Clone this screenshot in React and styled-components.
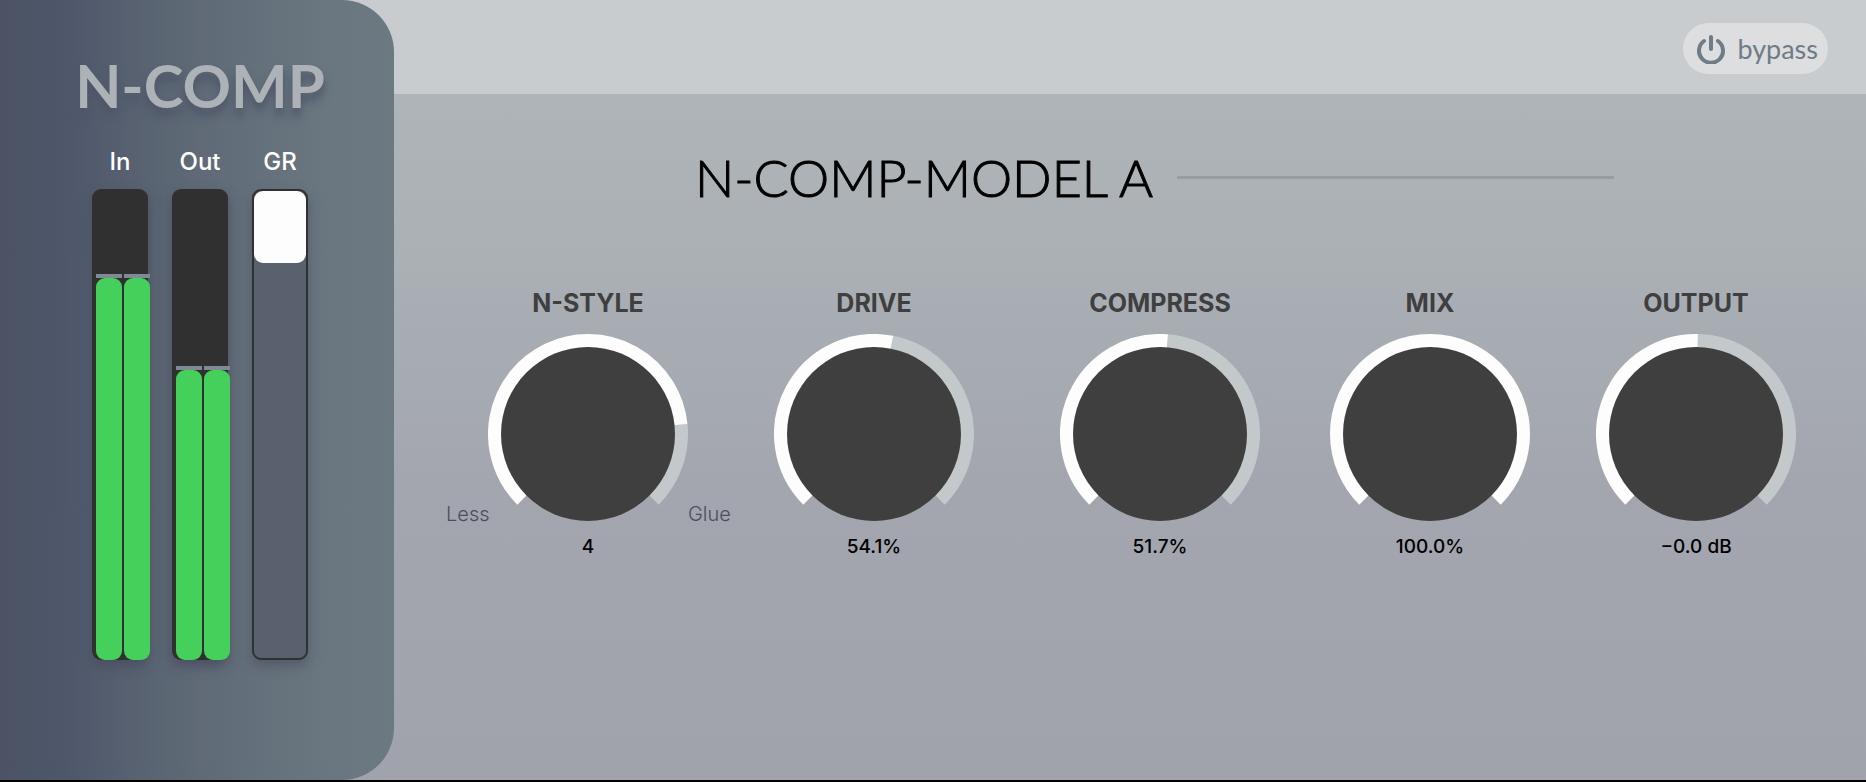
import React, { useState } from "react";
import styled, { createGlobalStyle } from "styled-components";

const GlobalStyle = createGlobalStyle`
  * {
    box-sizing: border-box;
  }
  body {
    margin: 0;
    background: #000;
    font-family: "Inter", sans-serif;
  }
`;

const Plugin = styled.div`
  display: flex;
  min-height: 100vh;
  border-bottom: 2px solid #000;
  background: linear-gradient(
    #aeb4b7 12%,
    #aab0b4 34%,
    #a8adb4 40%,
    #a3a6ae 62%,
    #a0a3ab
  );
`;

const Sidebar = styled.aside`
  position: relative;
  z-index: 1;
  flex: 0 0 394px;
  display: flex;
  flex-direction: column;
  align-items: center;
  padding: 51px 0 120px 6px;
  border-radius: 0 52px 52px 0;
  background: linear-gradient(
    90deg,
    #4b5364,
    #4e576a 16%,
    #5f6a76 50%,
    #6a7780 84%,
    #6d7981
  );
`;

const Logo = styled.h1`
  margin: 0;
  font-family: "Lato", sans-serif;
  font-size: 60px;
  font-weight: 700;
  line-height: 68px;
  white-space: nowrap;
  color: #acb2b6;
  text-shadow: 0 8px 8px #4e5568;
`;

const Meters = styled.div`
  flex: 1;
  display: flex;
  gap: 24px;
  padding-top: 27px;
`;

const Meter = styled.div`
  display: flex;
  flex-direction: column;
  align-items: center;
  gap: 11px;
  width: 56px;
`;

const MeterLabel = styled.span`
  font-size: 24px;
  font-weight: 500;
  line-height: 32px;
  color: #fff;
`;

const Track = styled.div`
  flex: 1;
  display: flex;
  align-items: flex-end;
  gap: 2px;
  width: 56px;
  min-height: 200px;
  padding-left: 4px;
  border-radius: 9px;
  background: #303030;
  box-shadow: 0 6px 12px #4b4f62;
`;

const Level = styled.div`
  flex: 0 0 26px;
  height: ${(props) => props.$level}%;
  border-top: 4px solid #808a94;
  &::after {
    content: "";
    display: block;
    height: 100%;
    border-radius: 9px;
    background: #44d05b;
  }
`;

const Reduction = styled.div`
  flex: 1;
  width: 56px;
  min-height: 200px;
  border: 2px solid #303030;
  border-radius: 9px;
  background: #59616f;
  box-shadow: 0 6px 12px #555a69;
`;

const ReductionFill = styled.div`
  height: 72px;
  border-radius: 9px;
  background: #fdfdfd;
`;

const Main = styled.main`
  flex: 1;
  min-width: 0;
  display: flex;
  flex-direction: column;
`;

/* runs on behind the rounded corner of the sidebar */
const TopBar = styled.header`
  display: flex;
  justify-content: flex-end;
  align-items: center;
  height: 94px;
  margin-left: -52px;
  padding: 3px 38px 0 0;
  background: #c8ccce;
`;

const Bypass = styled.button`
  display: flex;
  align-items: center;
  gap: 11px;
  height: 51px;
  padding: 0 10px 0 13px;
  border: 0;
  border-radius: 26px;
  background: #dcdee0;
  font-family: "Lato", sans-serif;
  font-size: 27px;
  line-height: 32px;
  color: #6f7c86;
  cursor: pointer;
`;

const Panel = styled.section`
  padding: 51px 31px 32px 51px;
`;

const Heading = styled.div`
  display: flex;
  align-items: center;
  gap: 24px;
  padding: 0 221px 0 250px;
`;

const Title = styled.h2`
  margin: 0;
  font-family: "Lato", sans-serif;
  font-size: 52px;
  font-weight: 300;
  line-height: 64px;
  white-space: nowrap;
  color: #000;
  -webkit-text-stroke: 1px #000;
`;

const Rule = styled.div`
  flex: 1;
  height: 3px;
  background: #999da1;
`;

const Controls = styled.div`
  display: grid;
  grid-template-columns: 286fr 286fr 286fr 254fr 278fr;
  margin-top: 78px;
`;

const Control = styled.div`
  display: flex;
  flex-direction: column;
  align-items: center;
`;

const ControlName = styled.label`
  font-size: 25px;
  font-weight: 700;
  line-height: 32px;
  color: #3f3f3f;
`;

const DialRow = styled.div`
  display: flex;
  align-items: flex-end;
  margin-top: 15px;
`;

const Dial = styled.div`
  position: relative;
  width: 200px;
  height: 200px;
  svg {
    display: block;
  }
`;

const Range = styled.input`
  position: absolute;
  inset: 0;
  width: 100%;
  height: 100%;
  margin: 0;
  opacity: 0;
  cursor: pointer;
`;

const Bound = styled.span`
  width: 42px;
  padding-bottom: 8px;
  font-size: 20px;
  font-weight: 300;
  line-height: 24px;
  text-align: center;
  color: #4a505a;
`;

const Value = styled.output`
  margin-top: 1px;
  font-size: 19px;
  font-weight: 500;
  line-height: 24px;
  color: #000;
`;

const meters = [
  { label: "In", levels: [82, 82] },
  { label: "Out", levels: [62.5, 62.5] },
];

const percent = (v) => `${v.toFixed(1)}%`;
const decibel = (v) => `${v > 0 ? "" : "−"}${Math.abs(v).toFixed(1)} dB`;

const controls = [
  { name: "N-STYLE", value: 4, min: 0, max: 5, step: 1, fill: 0.812, low: "Less", high: "Glue", format: (v) => `${v}` },
  { name: "DRIVE", value: 54.1, min: 0, max: 100, step: 0.1, format: percent },
  { name: "COMPRESS", value: 51.7, min: 0, max: 100, step: 0.1, format: percent },
  { name: "MIX", value: 100, min: 0, max: 100, step: 0.1, format: percent },
  { name: "OUTPUT", value: 0, min: -12, max: 12, step: 0.1, fill: 0.504, format: decibel },
];

// the ring covers 270 degrees and starts at the lower left
const arc = (from, to) => {
  const point = (t) => {
    const a = ((t * 270 - 135) * Math.PI) / 180;
    return `${100 + 93 * Math.sin(a)} ${100 - 93 * Math.cos(a)}`;
  };
  return `M${point(from)} A93 93 0 ${(to - from) * 270 > 180 ? 1 : 0} 1 ${point(to)}`;
};

const Knob = ({ control }) => {
  const [value, setValue] = useState(control.value);
  const { name, min, max, step, low, high, format } = control;
  const id = `knob-${name.toLowerCase()}`;
  const ratio =
    control.fill && value === control.value
      ? control.fill
      : (value - min) / (max - min);

  return (
    <Control>
      <ControlName htmlFor={id}>{name}</ControlName>
      <DialRow>
        {low && <Bound>{low}</Bound>}
        <Dial>
          <svg viewBox="0 0 200 200" aria-hidden="true">
            {ratio < 1 && (
              <path d={arc(ratio, 1)} fill="none" stroke="#c3c8ca" strokeWidth="14" />
            )}
            {ratio > 0 && (
              <path d={arc(0, ratio)} fill="none" stroke="#fdfdfd" strokeWidth="14" />
            )}
            <circle cx="100" cy="100" r="87" fill="#3f3f3f" />
          </svg>
          <Range
            id={id}
            type="range"
            min={min}
            max={max}
            step={step}
            value={value}
            onChange={(e) => setValue(Number(e.target.value))}
          />
        </Dial>
        {high && <Bound>{high}</Bound>}
      </DialRow>
      <Value htmlFor={id}>{format(value)}</Value>
    </Control>
  );
};

export default function App() {
  const [bypassed, setBypassed] = useState(false);

  return (
    <>
      <GlobalStyle />
      <Plugin>
        <Sidebar>
          <Logo>N-COMP</Logo>
          <Meters>
            {meters.map((m) => (
              <Meter key={m.label}>
                <MeterLabel>{m.label}</MeterLabel>
                <Track>
                  {m.levels.map((level, i) => (
                    <Level key={i} $level={level} />
                  ))}
                </Track>
              </Meter>
            ))}
            <Meter>
              <MeterLabel>GR</MeterLabel>
              <Reduction>
                <ReductionFill />
              </Reduction>
            </Meter>
          </Meters>
        </Sidebar>
        <Main>
          <TopBar>
            <Bypass
              type="button"
              aria-pressed={bypassed}
              onClick={() => setBypassed(!bypassed)}
            >
              <svg width="30" height="30" viewBox="0 0 30 30" aria-hidden="true">
                <path
                  d="M8 7 A12 12 0 1 0 22 7 M15 3 V15"
                  fill="none"
                  stroke="#6f7c86"
                  strokeWidth="4"
                  strokeLinecap="round"
                />
              </svg>
              bypass
            </Bypass>
          </TopBar>
          <Panel>
            <Heading>
              <Title>N-COMP-MODEL A</Title>
              <Rule />
            </Heading>
            <Controls>
              {controls.map((c) => (
                <Knob key={c.name} control={c} />
              ))}
            </Controls>
          </Panel>
        </Main>
      </Plugin>
    </>
  );
}
